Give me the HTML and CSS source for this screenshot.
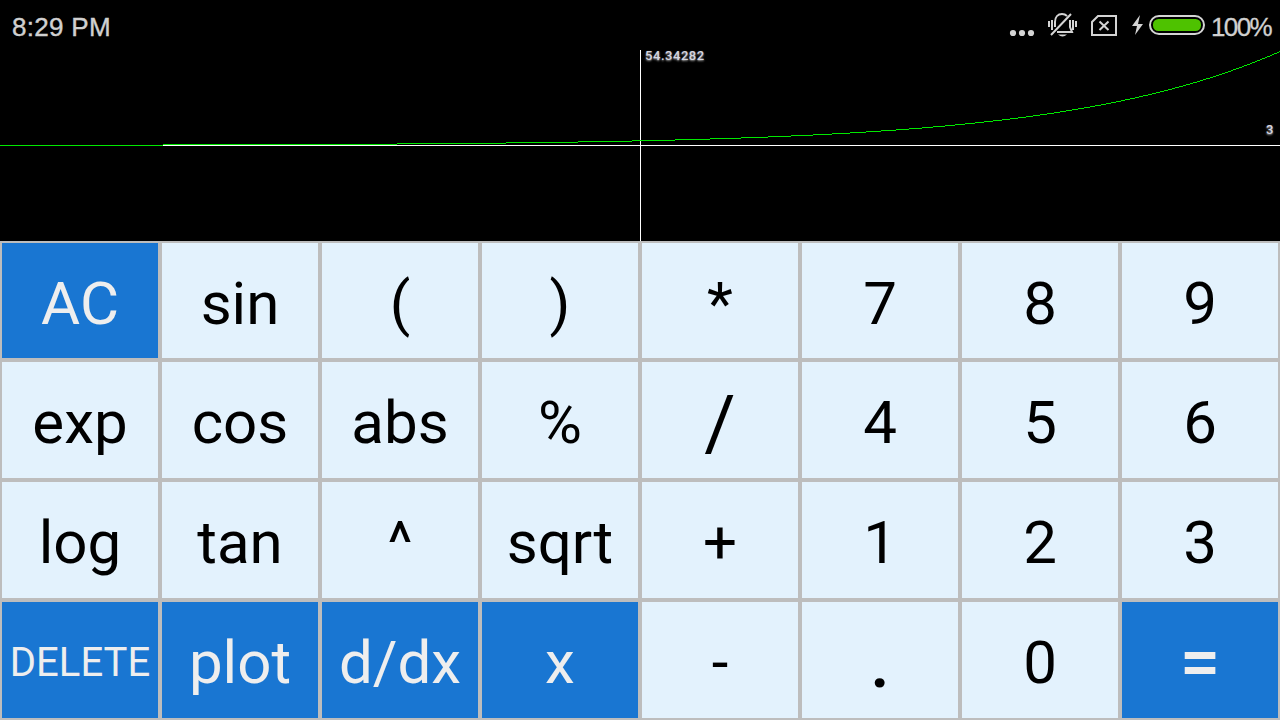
FILE: index.html
```html
<!DOCTYPE html>
<html lang="en">
<head>
<meta charset="utf-8">
<title>Calculator</title>
<link rel="stylesheet" href="styles.css">
</head>
<body>
<header class="status">
  <span class="clock">8:29 PM</span>
  <svg class="status-icons" width="200" height="50" viewBox="1003 0 200 50" fill="none" stroke="#d4d4d4" stroke-width="2">
    <g fill="#d4d4d4" stroke="none"><circle cx="1009" cy="33" r="3.1"/><circle cx="1018" cy="33" r="3.1"/><circle cx="1027" cy="33" r="3.1"/></g>
    <path d="M1051 27v-5c0-5 3-8 7-8q3 0 5 2M1066 20v7l2 5h-15M1047 35l20-21M1045 21v6M1048 20v10M1069 20v10M1072 21v6"/>
    <path d="M1054 34.500h9q-4.500 4-9 0z" fill="#d4d4d4" stroke="none"/>
    <path d="M1094 16h18v19h-24v-13zM1095.500 21.500l9 8.500M1104.500 21.500l-9 8.500"/>
    <path d="M1136 15l-8 11h5l-2 9 8-11h-5z" fill="#d4d4d4" stroke="none"/>
    <rect x="1146" y="16" width="54" height="18" rx="9"/>
    <rect x="1149" y="19" width="48" height="12" rx="5.500" fill="#4ec200" stroke="none"/>
  </svg>
  <span class="percent">100%</span>
</header>
<main>
  <section class="graph">
    <svg width="1280" height="191" viewBox="0 50 1280 191" shape-rendering="crispEdges">
      <path class="axis" d="M0 145.500H1280M640.500 50V241"/>
      <path class="curve" id="curve"/>
    </svg>
    <span class="label top">54.34282</span><span class="label right">3</span>
  </section>
  <section class="keys">
    <button class="blue">AC</button><button>sin</button><button>(</button><button>)</button><button>*</button><button>7</button><button>8</button><button>9</button>
    <button>exp</button><button>cos</button><button>abs</button><button>%</button><button class="slash">/</button><button>4</button><button>5</button><button>6</button>
    <button>log</button><button>tan</button><button>^</button><button>sqrt</button><button>+</button><button>1</button><button>2</button><button>3</button>
    <button class="blue delete">DELETE</button><button class="blue">plot</button><button class="blue">d/dx</button><button class="blue">x</button><button>-</button><button class="dot">.</button><button>0</button><button class="blue equals">=</button>
  </section>
</main>
<script src="plot.js"></script>
</body>
</html>
```
FILE: styles.css
```css
body { margin: 0; width: 1280px; height: 720px; overflow: hidden; background: #000; font-family: Roboto, sans-serif; }
.status { height: 50px; display: flex; align-items: center; color: #d0d0d0; font: 26px/50px "Liberation Sans", sans-serif; }
.clock { padding: 3px 0 0 12px; letter-spacing: .3px; -webkit-text-stroke: .4px #d0d0d0; }
.status-icons { margin-left: auto; }
.percent { width: 73px; padding: 3px 0 0 4px; box-sizing: border-box; letter-spacing: -1.6px; -webkit-text-stroke: .3px #d0d0d0; }
.graph { position: relative; height: 191px; }
.graph svg { display: block; }
.axis { stroke: #fff; }
.curve { fill: none; stroke: #00e800; }
.label { position: absolute; color: #d5d5e0; font-size: 13px; font-weight: 500; letter-spacing: .55px; line-height: 16px; text-shadow: 0 1px 2px #aaa; }
.top { left: 645px; top: -2px; }
.right { right: 6px; top: 72px; }
.keys { display: grid; grid-template: 119px repeat(3, 120px) / repeat(8, 160px); background: #bdbdbd; }
button { border: 2px solid #bdbdbd; background: #e3f2fd; color: #000; font: 60px/1 Roboto, sans-serif; padding: 6px 0 0; }
.blue { background: #1976d2; color: #eee; }
.delete { font-size: 40px; }
.slash { font-size: 76px; }
.dot, .equals { font-weight: 500; font-size: 72px; }
```
FILE: plot.js
```javascript
const scale = 1.724;
let path = '';
for (let px = 0; px < 1280; px++) {
  const x = (px - 640) / 640 * 3;
  const y = 145 - Math.round(Math.exp(x + 1) * scale);
  path += `M${px} ${y + 0.5}h1`;
}
document.getElementById('curve').setAttribute('d', path);
```
